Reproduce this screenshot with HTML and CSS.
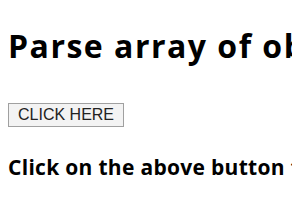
FILE: index.html
```html
<!DOCTYPE html>
<html lang="en">
<head>
    <meta charset="UTF-8">
    <meta name="viewport" content="width=device-width, initial-scale=1.0">
    <title>Parse array of objects</title>
    <link rel="stylesheet" href="styles.css">
</head>
<body>
    <h1 class="title">Parse array of objects</h1>
    <button class="click-btn" onclick="parseArray()">CLICK HERE</button>
    <h3 class="hint" id="result">Click on the above button to parse the array</h3>
</body>
</html>
```

FILE: styles.css
```css
body {
    font-family: "Open Sans", "Noto Sans", sans-serif;
    margin: 8px;
    color: #000;
    background: #fff;
    white-space: nowrap;
    overflow: hidden;
}

.title {
    font-size: 32px;
    font-weight: bold;
    line-height: 1.2;
    letter-spacing: 1.5px;
    margin: 19px 0 38px;
}

.click-btn {
    display: block;
    font-family: "Liberation Sans", Arial, sans-serif;
    font-size: 16px;
    line-height: 18px;
    color: #222;
    background: #f3f3f3;
    border: 1px solid #a0a0a0;
    border-radius: 0;
    padding: 2px 9px;
    margin: 0;
}

.hint {
    font-size: 21px;
    font-weight: bold;
    line-height: 1.2;
    letter-spacing: 0.3px;
    margin: 28px 0 0;
}
```
